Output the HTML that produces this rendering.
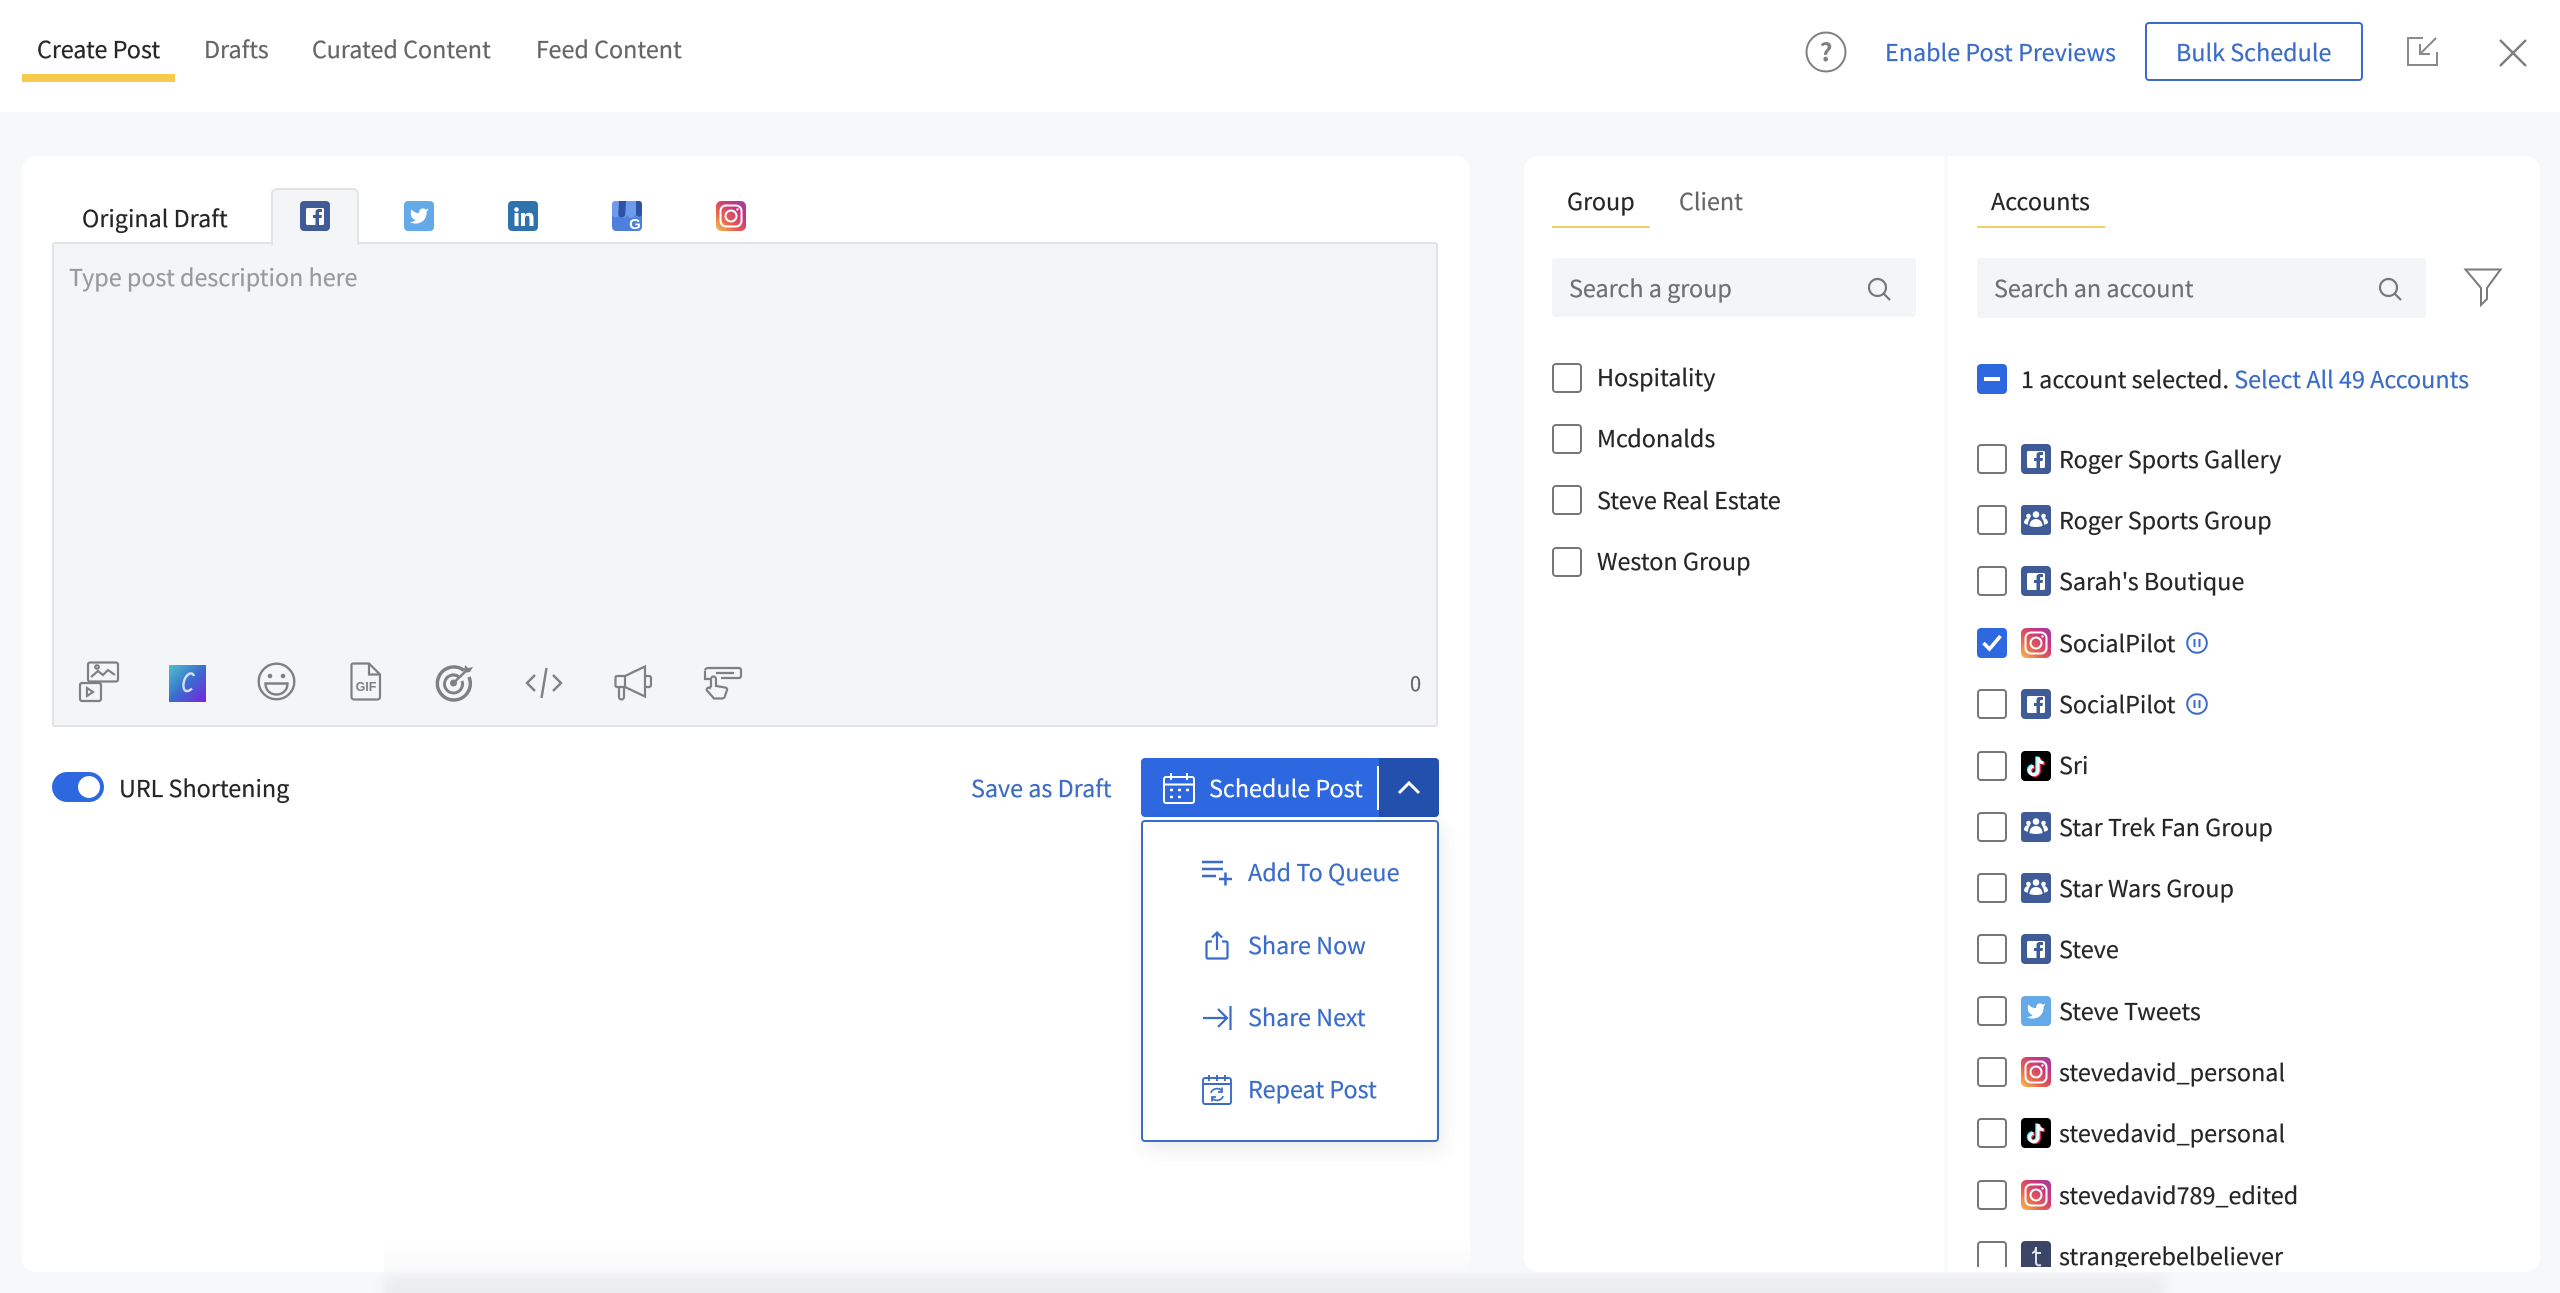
<!DOCTYPE html>
<html lang="en"><head><meta charset="utf-8"><title>Create Post</title>
<style>
*{box-sizing:border-box}
html,body{margin:0;padding:0}
body{width:2560px;height:1293px;overflow:hidden;position:relative;background:#f7f8fa;font-family:"Noto Sans CJK JP","Liberation Sans",sans-serif;font-size:23.350px;color:#262626}
.a{position:absolute}
.t{position:absolute;white-space:nowrap;line-height:40px;height:40px;margin-top:-1.500px;-webkit-text-stroke:.2px currentColor}
.g{color:#666}
.b{color:#3a6cc8}
.cb{position:absolute;width:30px;height:30px;border:2.500px solid #777;border-radius:4px;background:#fff}
.ic{position:absolute;width:30px;height:30px}
svg{display:block;overflow:visible}
</style></head><body>
<svg width="0" height="0" style="position:absolute">
<defs>
<linearGradient id="ig" x1="0" y1="1" x2="1" y2="0"><stop offset="0" stop-color="#f5c44e"/><stop offset=".35" stop-color="#e8604f"/><stop offset=".7" stop-color="#c9357f"/><stop offset="1" stop-color="#9c3fa5"/></linearGradient>
<linearGradient id="cv" x1="0" y1="0" x2="1" y2="1"><stop offset="0" stop-color="#4cc3c9"/><stop offset=".5" stop-color="#3a6cd0"/><stop offset="1" stop-color="#7a22dd"/></linearGradient>
<symbol id="fb" viewBox="0 0 30 30"><rect width="30" height="30" rx="4" fill="#3f5b98"/><rect x="6" y="7" width="18" height="17" rx="1.500" fill="#fff"/><path d="M15.500 24V17h-2.500v-3h2.500v-2.500c0-2.300 1.300-3.500 3.300-3.500H22v3h-1.800c-.9 0-1.200.4-1.200 1.200V14h3l-.5 3H19v7z" fill="#3f5b98"/></symbol>
<symbol id="tw" viewBox="0 0 30 30"><rect width="30" height="30" rx="4" fill="#64aae8"/><path transform="translate(5 5) scale(.84)" d="M23 3a10.900 10.900 0 0 1-3 1.400 4.480 4.480 0 0 0-7.860 3v1A10.660 10.660 0 0 1 3 4s-4 9 5 13a11.640 11.640 0 0 1-7 2c9 5 20 0 20-11.500a4.500 4.500 0 0 0-.08-.83A7.720 7.720 0 0 0 23 3z" fill="#fff"/></symbol>
<symbol id="li" viewBox="0 0 30 30"><rect width="30" height="30" rx="4" fill="#2f72ad"/><circle cx="8.500" cy="8.500" r="2.300" fill="#fff"/><rect x="6.500" y="12" width="4" height="13" fill="#fff"/><path d="M13 12h4v2c1-1.500 2.500-2.300 4-2.300 3 0 4.500 2 4.500 5V25h-4v-7.500c0-1.800-.7-2.700-2.200-2.700S17 16 17 17.500V25h-4z" fill="#fff"/></symbol>
<symbol id="gm" viewBox="0 0 30 30"><rect width="30" height="30" rx="4" fill="#4d7fdc"/><path d="M3 0h24a3 3 0 0 1 3 3v10a3.500 3.500 0 0 1-7 0 4 4 0 0 1-8 0 4 4 0 0 1-8 0 3.500 3.500 0 0 1-7 0V3a3 3 0 0 1 3-3z" fill="#6f9bea"/><path d="M7 0h7l-.7 13a3.500 3.500 0 0 1-7 0zM24 0h3a3 3 0 0 1 3 3v11a3.500 3.500 0 0 1-6 0z" fill="#2e52a8"/><text x="23" y="28" font-size="15" font-weight="700" text-anchor="middle" fill="#fff" font-family="Liberation Sans,sans-serif">G</text></symbol>
<symbol id="in" viewBox="0 0 30 30"><rect width="30" height="30" rx="5" fill="url(#ig)"/><rect x="4.500" y="4.500" width="21" height="21" rx="5.500" fill="none" stroke="#fff" stroke-width="2"/><circle cx="15" cy="15" r="5.500" fill="none" stroke="#fff" stroke-width="2"/><circle cx="21.500" cy="8.500" r="1.200" fill="#fff"/></symbol>
<symbol id="gr" viewBox="0 0 30 30"><rect width="30" height="30" rx="3" fill="#3f5b98"/><circle cx="15" cy="9.500" r="3.300" fill="#fff"/><circle cx="7.500" cy="11" r="2.300" fill="#fff"/><circle cx="22.500" cy="11" r="2.300" fill="#fff"/><path d="M8.500 21c0-4.500 3-7 6.500-7s6.500 2.500 6.500 7c-4 1.300-9 1.300-13 0z" fill="#fff"/><path d="M3 18c0-3 2-5 4.500-5 .7 0 1.200.1 1.700.3C7.800 14.800 7 17 7 19.800 5.500 19.500 4 19 3 18zM27 18c0-3-2-5-4.500-5-.7 0-1.200.1-1.700.3 1.400 1.500 2.200 3.700 2.200 6.500 1.500-.3 3-.8 4-1.800z" fill="#fff"/></symbol>
<symbol id="tk" viewBox="0 0 30 30"><rect width="30" height="30" rx="4" fill="#000"/><g fill="none" stroke-width="3.200"><path d="M17 6v13.500a4.200 4.200 0 1 1-4.500-4.200M17 6.500c.5 3 2.500 5 5.500 5.300" stroke="#25f4ee" transform="translate(-1.200 -.6)"/><path d="M17 6v13.500a4.200 4.200 0 1 1-4.500-4.200M17 6.500c.5 3 2.500 5 5.500 5.300" stroke="#fe2c55" transform="translate(1.200 .8)"/><path d="M17 6v13.500a4.200 4.200 0 1 1-4.500-4.200M17 6.500c.5 3 2.500 5 5.500 5.300" stroke="#fff"/></g></symbol>
<symbol id="tu" viewBox="0 0 30 30"><rect width="30" height="30" rx="4" fill="#3b4565"/><path d="M15 6v15c0 3 2 4 5 3M11 12c3-.5 4-3 4-6M15 12h5" fill="none" stroke="#dfe3ee" stroke-width="2"/></symbol>
<symbol id="pa" viewBox="0 0 22 22"><circle cx="11" cy="11" r="9.800" fill="none" stroke="#3a6cc8" stroke-width="2"/><path d="M8.500 7v8M13.500 7v8" stroke="#3a6cc8" stroke-width="2"/></symbol>
<symbol id="se" viewBox="0 0 24 24"><circle cx="10.500" cy="10.500" r="8.500" fill="none" stroke="#777" stroke-width="2.200"/><path d="M16.500 16.500L23 23" stroke="#777" stroke-width="2.200"/></symbol>
</defs></svg>

<!-- header -->
<div class="a" style="left:0;top:0;width:2560px;height:112px;background:#fff"></div>
<div class="t" style="left:37px;top:29px">Create Post</div>
<div class="a" style="left:22px;top:74px;width:153px;height:8px;background:#f6cb4c"></div>
<div class="t g" style="left:204px;top:29px">Drafts</div>
<div class="t g" style="left:312px;top:29px">Curated Content</div>
<div class="t g" style="left:536px;top:29px">Feed Content</div>
<svg class="a" style="left:1805px;top:31px" width="42" height="42" viewBox="0 0 42 42"><circle cx="21" cy="21" r="19.500" fill="none" stroke="#808080" stroke-width="2"/><text x="21" y="30" text-anchor="middle" font-size="25" font-weight="700" fill="#808080" font-family="Noto Sans CJK JP,sans-serif">?</text></svg>
<div class="t b" style="left:1885px;top:32px">Enable Post Previews</div>
<div class="a" style="left:2145px;top:22px;width:218px;height:59px;border:2px solid #3a6cc8;border-radius:4px;background:#fff"></div>
<div class="t b" style="left:2176px;top:32px">Bulk Schedule</div>
<svg class="a" style="left:2405px;top:36px" width="34" height="32" viewBox="0 0 34 32" fill="none" stroke="#8a8a8a" stroke-width="2"><path d="M18 2H3v27h29V16"/><path d="M31 2L15 18M15 8v10h10"/></svg>
<svg class="a" style="left:2498px;top:38px" width="30" height="30" viewBox="0 0 30 30" stroke="#808080" stroke-width="2.400" fill="none"><path d="M2 2l26 26M28 2L2 28"/></svg>

<!-- left card -->
<div class="a" style="left:22px;top:156px;width:1448px;height:1116px;background:#fff;border-radius:14px"></div>
<div class="t" style="left:82px;top:198px">Original Draft</div>
<div class="a" style="left:52px;top:242px;width:1386px;height:485px;background:#f4f5f7;border:2px solid #e2e3e5;border-radius:3px"></div>
<div class="a" style="left:271px;top:188px;width:88px;height:57px;background:#f4f5f7;border:2px solid #e2e3e5;border-bottom:0;border-radius:6px 6px 0 0"></div>
<svg class="a" style="left:300px;top:201px" width="30" height="30"><use href="#fb"/></svg>
<svg class="a" style="left:404px;top:201px" width="30" height="30"><use href="#tw"/></svg>
<svg class="a" style="left:508px;top:201px" width="30" height="30"><use href="#li"/></svg>
<svg class="a" style="left:612px;top:201px" width="30" height="30"><use href="#gm"/></svg>
<svg class="a" style="left:716px;top:201px" width="30" height="30"><use href="#in"/></svg>
<div class="t" style="left:69px;top:257px;color:#9a9a9a">Type post description here</div>

<!-- toolbar -->
<svg class="a" style="left:78px;top:661px" width="42" height="42" viewBox="0 0 42 42" fill="none" stroke="#808080" stroke-width="2.200"><rect x="10" y="1.500" width="30" height="19" rx="2"/><path d="M13 16l7-6 5 4 5-5 7 5"/><circle cx="19" cy="6" r="1.800"/><rect x="2" y="22" width="21" height="18" rx="2"/><path d="M9 27v8l6-4z"/></svg>
<svg class="a" style="left:169px;top:665px" width="37" height="37" viewBox="0 0 37 37"><rect width="37" height="37" fill="url(#cv)"/><path d="M25 11c-1-3-4-3.500-6.500-1-3.500 3.500-5 10-3.500 14 1.200 3 4.500 2.800 8-.5" fill="none" stroke="#d4ddf8" stroke-width="2.400"/></svg>
<svg class="a" style="left:257px;top:662px" width="39" height="39" viewBox="0 0 39 39" fill="none" stroke="#808080" stroke-width="2.400"><circle cx="19.500" cy="19.500" r="17.800"/><circle cx="13" cy="14" r="2.300" fill="#808080" stroke="none"/><circle cx="26" cy="14" r="2.300" fill="#808080" stroke="none"/><path d="M8.500 21.500h22c0 7-5 11-11 11s-11-4-11-11z"/></svg>
<svg class="a" style="left:350px;top:662px" width="32" height="39" viewBox="0 0 32 39" fill="none" stroke="#808080" stroke-width="2.200"><path d="M3 1.500h16l11 11V35a2.500 2.500 0 0 1-2.500 2.500H4A2.500 2.500 0 0 1 1.500 35V3A1.500 1.500 0 0 1 3 1.500zM19 1.500v11h11"/><text x="16" y="29" text-anchor="middle" font-size="12.500" font-weight="700" fill="#808080" stroke="none" font-family="Liberation Sans,sans-serif">GIF</text></svg>
<svg class="a" style="left:436px;top:663px" width="38" height="38" viewBox="0 0 38 38" fill="none" stroke="#808080"><path d="M28 7.500A16.500 16.500 0 1 0 33 14" stroke-width="3.500"/><path d="M22.500 13.500A9 9 0 1 0 26 18" stroke-width="3"/><circle cx="17.500" cy="20" r="3.500" fill="#808080" stroke="none"/><path d="M17.500 20L32 6" stroke-width="2.500"/><path d="M28 9l1-7 3 3 5-1-3 5-6 1z" fill="#808080" stroke="none"/></svg>
<svg class="a" style="left:525px;top:667px" width="38" height="32" viewBox="0 0 38 32" fill="none" stroke="#808080" stroke-width="2.400"><path d="M10 8L2 16l8 8M28 8l8 8-8 8M21.500 1L16.500 31"/></svg>
<svg class="a" style="left:614px;top:664px" width="39" height="36" viewBox="0 0 39 36" fill="none" stroke="#808080" stroke-width="2.200"><path d="M31 2.500L11 12H3a1.500 1.500 0 0 0-1.500 1.500v8A1.500 1.500 0 0 0 3 23h8l20 9.500z"/><path d="M31 12h4a2 2 0 0 1 2 2v7a2 2 0 0 1-2 2h-4"/><path d="M5 23v10a2 2 0 0 0 5 0V23M11 12v11"/></svg>
<svg class="a" style="left:703px;top:666px" width="39" height="34" viewBox="0 0 39 34" fill="none" stroke="#808080" stroke-width="2.200"><path d="M2 4.500A3 3 0 0 1 5 2h31a2 2 0 0 1 2 2v6a2 2 0 0 1-2 2H18"/><path d="M2 5v8h6M13 7h18"/><path d="M8 20v-7a2.500 2.500 0 0 1 5 0v7l9 1.500a2 2 0 0 1 2 2.500l-2 6a3 3 0 0 1-3 2.500H11l-7-8a2 2 0 0 1 3-2.500z"/></svg>
<div class="t" style="left:1410px;top:664px;font-size:20px;color:#666">0</div>

<!-- toggle -->
<div class="a" style="left:52px;top:772px;width:52px;height:30px;background:#2d68e0;border-radius:15px"></div>
<div class="a" style="left:78px;top:776px;width:22px;height:22px;background:#fff;border-radius:50%"></div>
<div class="t" style="left:119px;top:768px">URL Shortening</div>
<div class="t b" style="left:971px;top:768px">Save as Draft</div>

<!-- schedule -->
<div class="a" style="left:1141px;top:758px;width:298px;height:59px;background:#2d68e0;border-radius:4px;overflow:hidden"><div class="a" style="left:238px;top:0;width:60px;height:59px;background:#2450ad"></div><div class="a" style="left:236px;top:8px;width:2px;height:44px;background:#fff"></div></div>
<svg class="a" style="left:1162px;top:772px" width="34" height="33" viewBox="0 0 34 33" fill="none" stroke="#fff" stroke-width="2"><rect x="2" y="5" width="30" height="26" rx="2"/><path d="M2 12.500h30M9 1v7M25 1v7M13 5h8"/><path d="M8 18h3M16 18h3M24 18h3M8 25h3M16 25h3" stroke-width="2.500"/></svg>
<div class="t" style="left:1209px;top:768px;color:#fff">Schedule Post</div>
<svg class="a" style="left:1397px;top:781px" width="24" height="14" viewBox="0 0 24 14" fill="none" stroke="#fff" stroke-width="3"><path d="M2 12L12 2l10 10"/></svg>

<!-- dropdown -->
<div class="a" style="left:1141px;top:820px;width:298px;height:322px;background:#fff;border:2px solid #3a6cc8;border-radius:4px;box-shadow:4px 8px 18px rgba(60,70,90,.1)"></div>
<svg class="a" style="left:1201px;top:860px" width="32" height="26" viewBox="0 0 32 26" fill="none" stroke="#3a6cc8" stroke-width="2.600"><path d="M1 2h21M1 9h21M1 16h14M18 19h13M24.500 12.500v13"/></svg>
<svg class="a" style="left:1205px;top:931px" width="24" height="29" viewBox="0 0 24 29" fill="none" stroke="#3a6cc8" stroke-width="2.200"><path d="M7 10.500H3a1.500 1.500 0 0 0-1.500 1.500v14A1.500 1.500 0 0 0 3 27.500h18a1.500 1.500 0 0 0 1.500-1.500V12a1.500 1.500 0 0 0-1.500-1.500h-4M12 19V2M7 6.500L12 1.500l5 5"/></svg>
<svg class="a" style="left:1202px;top:1005px" width="30" height="26" viewBox="0 0 30 26" fill="none" stroke="#3a6cc8" stroke-width="2.200"><path d="M1 13h24M16 4l9 9-9 9M28.500 1v24"/></svg>
<svg class="a" style="left:1202px;top:1075px" width="30" height="30" viewBox="0 0 30 30" fill="none" stroke="#3a6cc8" stroke-width="1.900"><rect x="1" y="3" width="28" height="26" rx="2"/><path d="M1 9h28M7 0v6M15 0v6M23 0v6"/><path d="M9 18a6 5 0 0 1 11-2M21 21a6 5 0 0 1-11 2M20 12.500V17h-4M10 26.500V22h4" stroke-width="1.700"/></svg>
<div class="t b" style="left:1248px;top:852px">Add To Queue</div>
<div class="t b" style="left:1248px;top:925px">Share Now</div>
<div class="t b" style="left:1248px;top:997px">Share Next</div>
<div class="t b" style="left:1248px;top:1069px">Repeat Post</div>

<!-- group card -->
<div class="a" style="left:1524px;top:156px;width:420px;height:1116px;background:#fff;border-radius:14px 0 0 14px"></div>
<div class="t" style="left:1567px;top:181px">Group</div>
<div class="t g" style="left:1679px;top:181px">Client</div>
<div class="a" style="left:1552px;top:226px;width:98px;height:2px;background:#f2cf6a"></div>
<div class="a" style="left:1552px;top:258px;width:364px;height:59px;background:#f4f5f7;border-radius:3px"></div>
<div class="t" style="left:1569px;top:268px;color:#707070">Search a group</div>
<svg class="a" style="left:1867px;top:277px" width="24" height="24"><use href="#se"/></svg>
<div class="cb" style="left:1552px;top:363px"></div><div class="t" style="left:1597px;top:357px">Hospitality</div>
<div class="cb" style="left:1552px;top:424px"></div><div class="t" style="left:1597px;top:418px">Mcdonalds</div>
<div class="cb" style="left:1552px;top:485px"></div><div class="t" style="left:1597px;top:480px">Steve Real Estate</div>
<div class="cb" style="left:1552px;top:547px"></div><div class="t" style="left:1597px;top:541px">Weston Group</div>

<!-- accounts card -->
<div class="a" style="left:1948px;top:156px;width:592px;height:1116px;background:#fff;border-radius:0 14px 14px 0;overflow:hidden">
<div class="t" style="left:43px;top:25px">Accounts</div>
<div class="a" style="left:29px;top:70px;width:128px;height:2px;background:#f2cf6a"></div>
<div class="a" style="left:29px;top:102px;width:449px;height:60px;background:#f4f5f7;border-radius:3px"></div>
<div class="t" style="left:46px;top:112px;color:#707070">Search an account</div>
<svg class="a" style="left:430px;top:121px" width="24" height="24"><use href="#se"/></svg>
<svg class="a" style="left:516px;top:112px" width="38" height="39" viewBox="0 0 38 39" fill="none" stroke="#7a7a7a" stroke-width="2"><path d="M1.500 1.500h35L23 20v11l-6 6V20z"/></svg>
<div class="a" style="left:29px;top:208px;width:30px;height:30px;background:#2d68e0;border-radius:4px"></div><div class="a" style="left:36px;top:221px;width:16px;height:4px;background:#fff"></div>
<div class="t" style="left:73px;top:203px">1 account selected. <span class="b">Select All 49 Accounts</span></div>

<div class="cb" style="left:29px;top:288px"></div><svg class="ic" style="left:73px;top:288px"><use href="#fb"/></svg><div class="t" style="left:111px;top:283px">Roger Sports Gallery</div>
<div class="cb" style="left:29px;top:349px"></div><svg class="ic" style="left:73px;top:349px"><use href="#gr"/></svg><div class="t" style="left:111px;top:344px">Roger Sports Group</div>
<div class="cb" style="left:29px;top:410px"></div><svg class="ic" style="left:73px;top:410px"><use href="#fb"/></svg><div class="t" style="left:111px;top:405px">Sarah's Boutique</div>
<div class="a" style="left:29px;top:472px;width:30px;height:30px;background:#2d68e0;border-radius:4px"></div><svg class="a" style="left:33px;top:477px" width="22" height="20" viewBox="0 0 22 20" fill="none" stroke="#fff" stroke-width="3.600"><path d="M2.500 10l6 6 11-13"/></svg><svg class="ic" style="left:73px;top:472px"><use href="#in"/></svg><div class="t" style="left:111px;top:467px">SocialPilot</div><svg class="a" style="left:238px;top:476px" width="22" height="22"><use href="#pa"/></svg>
<div class="cb" style="left:29px;top:533px"></div><svg class="ic" style="left:73px;top:533px"><use href="#fb"/></svg><div class="t" style="left:111px;top:528px">SocialPilot</div><svg class="a" style="left:238px;top:537px" width="22" height="22"><use href="#pa"/></svg>
<div class="cb" style="left:29px;top:595px"></div><svg class="ic" style="left:73px;top:595px"><use href="#tk"/></svg><div class="t" style="left:111px;top:589px">Sri</div>
<div class="cb" style="left:29px;top:656px"></div><svg class="ic" style="left:73px;top:656px"><use href="#gr"/></svg><div class="t" style="left:111px;top:651px">Star Trek Fan Group</div>
<div class="cb" style="left:29px;top:717px"></div><svg class="ic" style="left:73px;top:717px"><use href="#gr"/></svg><div class="t" style="left:111px;top:712px">Star Wars Group</div>
<div class="cb" style="left:29px;top:778px"></div><svg class="ic" style="left:73px;top:778px"><use href="#fb"/></svg><div class="t" style="left:111px;top:773px">Steve</div>
<div class="cb" style="left:29px;top:840px"></div><svg class="ic" style="left:73px;top:840px"><use href="#tw"/></svg><div class="t" style="left:111px;top:835px">Steve Tweets</div>
<div class="cb" style="left:29px;top:901px"></div><svg class="ic" style="left:73px;top:901px"><use href="#in"/></svg><div class="t" style="left:111px;top:896px">stevedavid_personal</div>
<div class="cb" style="left:29px;top:962px"></div><svg class="ic" style="left:73px;top:962px"><use href="#tk"/></svg><div class="t" style="left:111px;top:957px">stevedavid_personal</div>
<div class="cb" style="left:29px;top:1024px"></div><svg class="ic" style="left:73px;top:1024px"><use href="#in"/></svg><div class="t" style="left:111px;top:1019px">stevedavid789_edited</div>
<div class="a" style="left:0;top:1085px;width:592px;height:26px;overflow:hidden"><div class="cb" style="left:29px;top:0"></div><svg class="ic" style="left:73px;top:0"><use href="#tu"/></svg><div class="t" style="left:111px;top:-5px">strangerebelbeliever</div></div>
</div>
<div class="a" style="left:1944px;top:156px;width:4px;height:1116px;background:#f8f9fb"></div>

<!-- bottom blur -->
<div class="a" style="left:0;top:1272px;width:2560px;height:21px;overflow:hidden"><div class="a" style="left:384px;top:4px;width:1780px;height:30px;background:#ebecee;filter:blur(6px)"></div></div>
<div class="a" style="left:384px;top:1240px;width:1086px;height:32px;background:linear-gradient(rgba(255,255,255,0),#f9f9fa)"></div>
</body></html>
